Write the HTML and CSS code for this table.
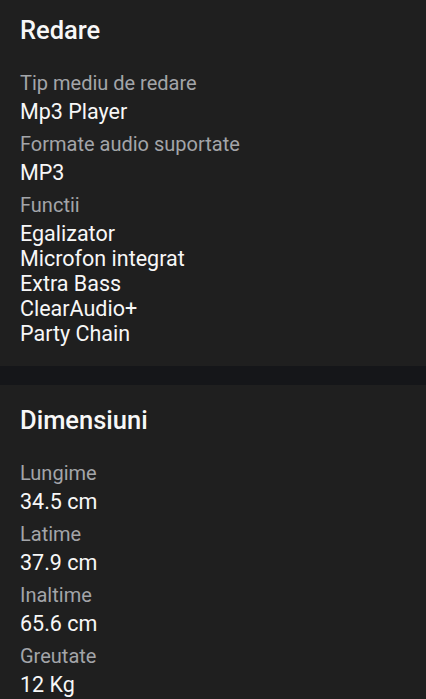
FILE: index.html
```html
<!DOCTYPE html>
<html>
  <head>
    <title>Specificatii</title>
    <meta charset='utf-8'>
    <link rel="stylesheet" href="styles.css">
  </head>

  <body>
    <div class="section first">
      <h2>Redare</h2>
      <div class="spec">
        <div class="label">Tip mediu de redare</div>
        <div class="value">Mp3 Player</div>
      </div>
      <div class="spec">
        <div class="label">Formate audio suportate</div>
        <div class="value">MP3</div>
      </div>
      <div class="spec">
        <div class="label">Functii</div>
        <div class="value">Egalizator</div>
        <div class="value">Microfon integrat</div>
        <div class="value">Extra Bass</div>
        <div class="value">ClearAudio+</div>
        <div class="value">Party Chain</div>
      </div>
    </div>

    <div class="section">
      <h2>Dimensiuni</h2>
      <div class="spec">
        <div class="label">Lungime</div>
        <div class="value">34.5 cm</div>
      </div>
      <div class="spec">
        <div class="label">Latime</div>
        <div class="value">37.9 cm</div>
      </div>
      <div class="spec">
        <div class="label">Inaltime</div>
        <div class="value">65.6 cm</div>
      </div>
      <div class="spec">
        <div class="label">Greutate</div>
        <div class="value">12 Kg</div>
      </div>
    </div>
  </body>
</html>
```

FILE: styles.css
```css
body {
  margin: 0;
  background: #151619;
  font-family: Roboto, "Noto Sans", sans-serif;
}

.section {
  background: #1f1f1f;
  padding: 20px 20px 12px;
  margin-bottom: 19px;
}
.section.first {
  padding-top: 15px;
}

h2 {
  margin: 0 0 26px;
  font-size: 25.5px;
  line-height: 30px;
  font-weight: 500;
  color: #f7f7f7;
}

.spec {
  margin-bottom: 8px;
}

.label {
  font-size: 20px;
  line-height: 25px;
  color: #a3a5a9;
  margin-bottom: 3px;
}

.value {
  font-size: 21.5px;
  line-height: 25px;
  color: #f7f7f7;
}
```
